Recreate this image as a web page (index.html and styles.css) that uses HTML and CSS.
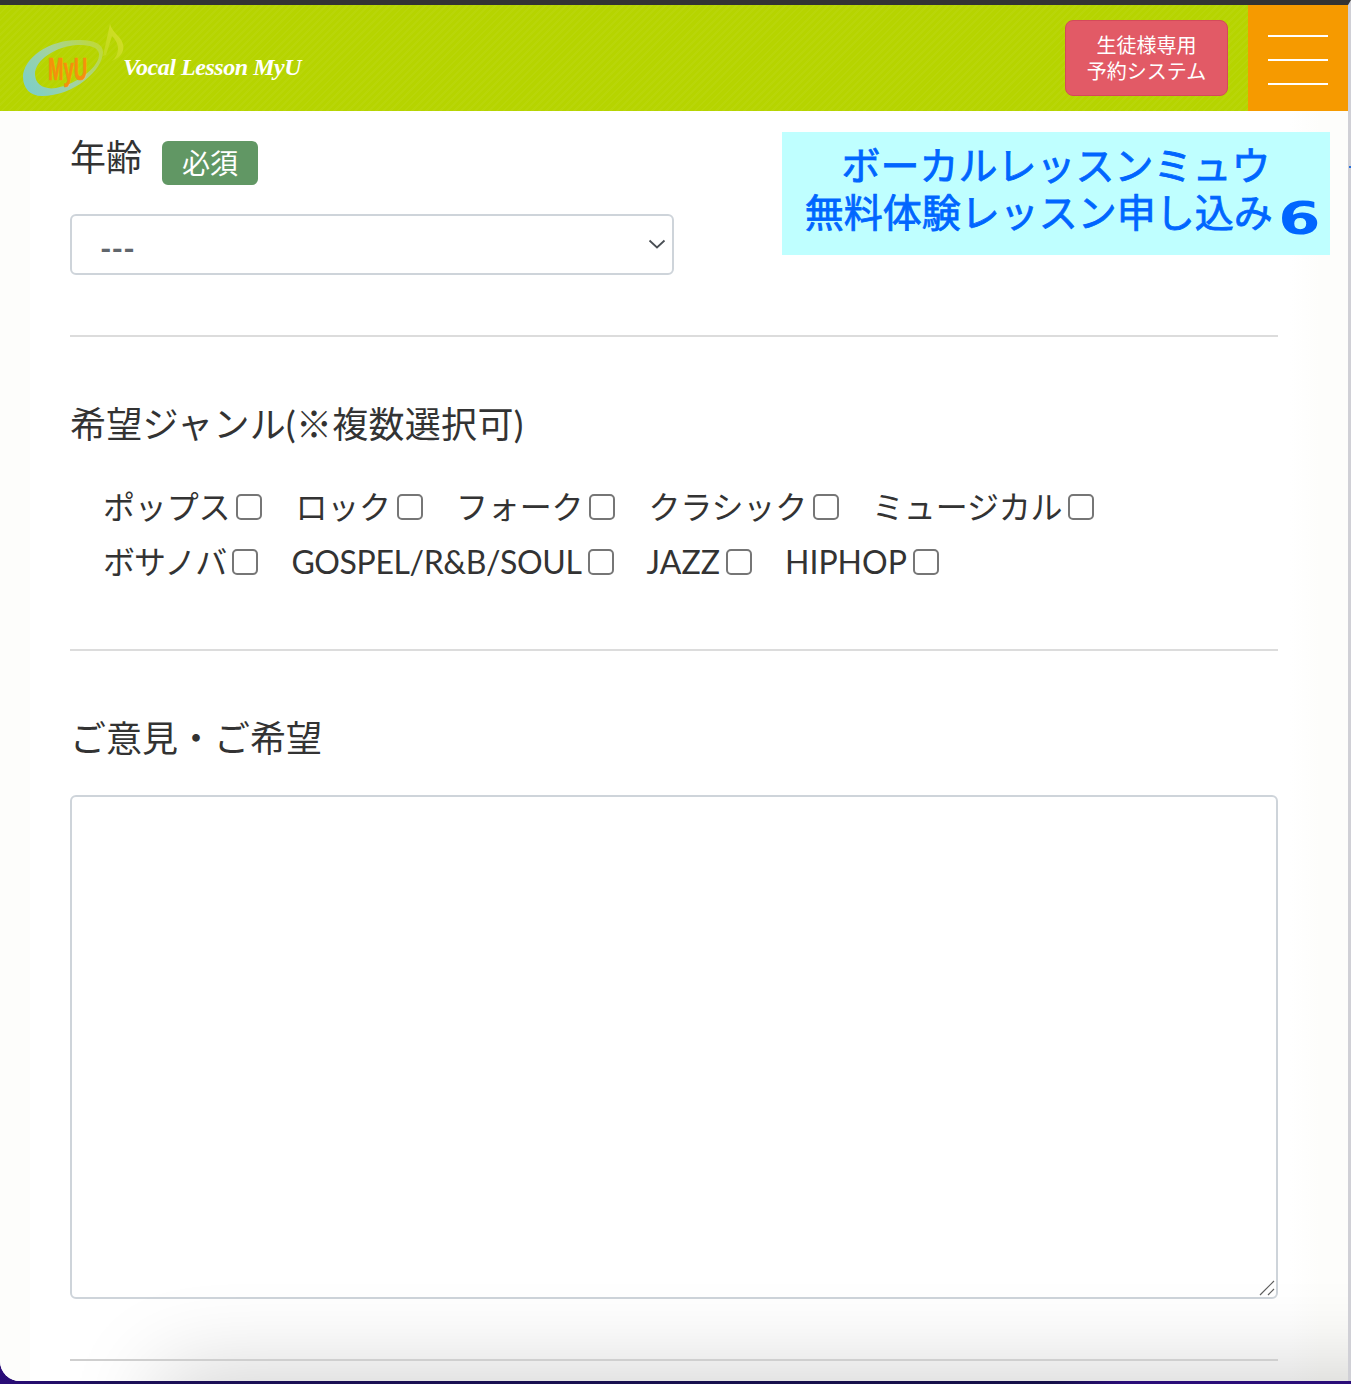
FILE: index.html
```html
<!DOCTYPE html>
<html lang="ja">
<head>
<meta charset="utf-8">
<title>Vocal Lesson MyU</title>
<link rel="stylesheet" href="styles.css">
</head>
<body>
<div class="page">
  <header class="site-header">
    <a class="brand">
      <svg class="logo" width="110" height="80" viewBox="0 0 110 80" aria-hidden="true">
        <defs>
          <linearGradient id="ring" x1="0" y1="0.75" x2="1" y2="0.2">
            <stop offset="0" stop-color="#7fcfc6"/>
            <stop offset="0.5" stop-color="#a3d2a0"/>
            <stop offset="1" stop-color="#bed83c"/>
          </linearGradient>
          <linearGradient id="note" x1="0" y1="1" x2="1" y2="0">
            <stop offset="0" stop-color="#bfd91c"/>
            <stop offset="1" stop-color="#d5de2a"/>
          </linearGradient>
        </defs>
        <path fill="url(#ring)" fill-rule="evenodd" d="M1 55C1 36 28 17 58 18C72 18 81 22 81 30C81 48 52 74 20 74C8 74 1 66 1 55ZM13 52C13 62 22 68 34 66C56 62 78 44 77 32C76 25 68 23 56 23C34 24 13 38 13 52Z"/>
        <path fill="url(#note)" d="M81 34L88 2C89 6 92 10 96 14C104 22 104 33 90 39C98 32 98 22 90 14L84 33Z"/>
        <text class="logo-mark" x="26" y="58" textLength="39" lengthAdjust="spacingAndGlyphs">MyU</text>
      </svg>
      <span class="brand-name">Vocal Lesson MyU</span>
    </a>
    <a class="reserve">生徒様専用<br>予約システム</a>
    <button class="menu" type="button" aria-label="メニュー"><i></i><i></i><i></i></button>
  </header>

  <main class="sheet">
    <div class="notice">ボーカルレッスンミュウ<br>無料体験レッスン申し込み<span class="notice-num">6</span></div>

    <section class="field field-age">
      <h2 class="label">年齢<span class="badge">必須</span></h2>
      <div class="select"><span>---</span>
        <svg width="18" height="10" viewBox="0 0 18 10" aria-hidden="true"><path d="M1.5 1.5L9 8.5L16.5 1.5" fill="none" stroke="#4a4f55" stroke-width="1.8"/></svg>
      </div>
    </section>

    <section class="field field-genre">
      <h2 class="label">希望ジャンル(※複数選択可)</h2>
      <div class="checks checks-first">
        <label class="check">ポップス<i></i></label>
        <label class="check">ロック<i></i></label>
        <label class="check">フォーク<i></i></label>
        <label class="check">クラシック<i></i></label>
        <label class="check">ミュージカル<i></i></label>
      </div>
      <div class="checks">
        <label class="check check-tight">ボサノバ<i></i></label>
        <label class="check check-latin">GOSPEL/R&amp;B/SOUL<i></i></label>
        <label class="check">JAZZ<i></i></label>
        <label class="check">HIPHOP<i></i></label>
      </div>
    </section>

    <section class="field field-comment">
      <h2 class="label">ご意見・ご希望</h2>
      <div class="textarea">
        <svg class="grip" width="16" height="16" viewBox="0 0 16 16" aria-hidden="true"><path d="M1 15L15 1M9 15L15 9" stroke="#5f5f5f" stroke-width="1.2" fill="none"/></svg>
      </div>
    </section>

    <hr class="last-rule">
    <div class="shade"></div>
  </main>
</div>
</body>
</html>
```

FILE: styles.css
```css
* { box-sizing: border-box; }
html, body { margin: 0; padding: 0; }
body {
  position: relative;
  width: 1351px;
  height: 1384px;
  overflow: hidden;
  background: linear-gradient(90deg, #2a0c78 0, #1c0f58 110px, #151048 1050px, #2a0c78 1125px);
  font-family: Lato, "Noto Sans CJK JP", sans-serif;
  color: #333;
}
body::after {
  content: "";
  position: absolute;
  left: 1349px;
  top: 166px;
  width: 2px;
  height: 2px;
  background: #2a6fd8;
}
.page {
  width: 1351px;
  height: 1381px;
  display: flex;
  flex-direction: column;
  background: #fff;
  border-right: 3px solid #d0d0d6;
  border-top: 5px solid #333;
  border-bottom-left-radius: 20px;
  overflow: hidden;
}
.site-header {
  flex: none;
  height: 106px;
  display: flex;
  align-items: center;
  background-color: #b6d400;
  background-image: repeating-linear-gradient(135deg, rgba(255,255,255,.035) 0 2px, transparent 2px 5px);
}
.brand {
  display: flex;
  align-items: flex-start;
  align-self: flex-start;
  padding: 17px 0 0 22px;
  flex: 1;
}
.logo { display: block; flex: none; }
.logo-mark {
  font-family: "Liberation Sans", sans-serif;
  font-size: 32px;
  font-weight: 700;
  fill: #f6900c;
  stroke: #f6900c;
  stroke-width: .7px;
}
.brand-name {
  margin: 30px 0 0 -9px;
  font-family: "Liberation Serif", serif;
  font-size: 24px;
  line-height: 30px;
  font-style: italic;
  font-weight: 700;
  letter-spacing: -0.45px;
  color: #fff;
  white-space: nowrap;
}
.reserve {
  width: 163px;
  height: 76px;
  margin-right: 20px;
  display: flex;
  align-items: center;
  justify-content: center;
  text-align: center;
  font-size: 20px;
  line-height: 26px;
  color: #fff;
  background: #e25a66;
  border: 1px solid #d44a5a;
  border-radius: 8px;
}
.menu {
  width: 100px;
  height: 106px;
  padding: 30px 20px 0;
  border: 0;
  background: #f69a00;
  display: flex;
  flex-direction: column;
  align-items: stretch;
  align-self: stretch;
}
.menu i { display: block; height: 2px; background: #fff; margin-bottom: 22px; }
.menu i:last-child { margin-top: 0; }

.sheet {
  flex: 1;
  position: relative;
  padding: 0 70px;
  background: linear-gradient(90deg, #fdfdfb 0 30px, #fff 30px 1290px, #fdfdfb 1320px);
  overflow: hidden;
}
.notice {
  position: absolute;
  left: 782px;
  top: 21px;
  width: 548px;
  height: 123px;
  padding-top: 11px;
  background: #bfffff;
  color: #0066ff;
  font-family: "Liberation Sans", "Noto Sans CJK JP", sans-serif;
  font-size: 39px;
  line-height: 47px;
  font-weight: 400;
  -webkit-text-stroke: .8px #0066ff;
  text-align: center;
  white-space: nowrap;
}
.notice-num {
  font-family: "DejaVu Sans", sans-serif;
  font-size: 44px;
  font-weight: 700;
  -webkit-text-stroke: 0;
  margin-left: 11px;
  margin-right: -7px;
  display: inline-block;
  transform: scaleX(1.38);
  vertical-align: -7px;
  line-height: 40px;
}
.field { border-bottom: 2px solid #dcdcdc; }
.field-age { height: 226px; padding-top: 24px; width: 1208px; }
.field-genre { height: 314px; padding-top: 65px; }
.field-genre .label { letter-spacing: .3px; }
.field-comment { padding-top: 65px; border: 0; }
.label {
  margin: 0;
  display: flex;
  align-items: flex-start;
  font-size: 36px;
  line-height: 44px;
  font-weight: 400;
  color: #333;
  white-space: nowrap;
}
.badge {
  margin-left: 20px;
  width: 96px;
  height: 44px;
  margin-top: 6px;
  display: flex;
  align-items: center;
  justify-content: center;
  font-size: 28px;
  letter-spacing: 0;
  color: #fff;
  background: #619764;
  border-radius: 6px;
}
.select {
  width: 604px;
  height: 61px;
  margin-top: 29px;
  padding: 6px 14px 0 28px;
  display: flex;
  align-items: center;
  justify-content: space-between;
  font-size: 31px;
  font-weight: 700;
  color: #60666c;
  border: 2px solid #ced4da;
  border-radius: 6px;
  background: #fff;
}
.select svg { margin-top: -8px; margin-right: -8px; }
.checks {
  display: flex;
  padding-left: 33px;
  gap: 33px;
  height: 55px;
  align-items: center;
}
.checks-first { margin-top: 33px; letter-spacing: -.15px; }
.check {
  display: flex;
  align-items: center;
  font-size: 32px;
  line-height: 40px;
  color: #333;
  white-space: nowrap;
}
.check-tight { letter-spacing: -1px; }
.check-latin { letter-spacing: -.38px; }
.check i {
  display: block;
  width: 26px;
  height: 26px;
  margin-left: 6px;
  border: 2px solid #767676;
  border-radius: 5px;
  background: #fff;
}
.textarea {
  position: relative;
  height: 504px;
  margin-top: 35px;
  background: #fff;
  border: 2px solid #ced4da;
  border-radius: 6px;
}
.grip { position: absolute; right: 1px; bottom: 1px; }
.last-rule {
  margin: 60px 0 0;
  height: 2px;
  border: 0;
  background: #cfcfcf;
  position: relative;
  z-index: 1;
}
.shade {
  position: absolute;
  left: 170px;
  right: -120px;
  top: 1270px;
  height: 100px;
  box-shadow: 0 0 90px 10px rgba(0,0,0,.18);
  pointer-events: none;
}
```
